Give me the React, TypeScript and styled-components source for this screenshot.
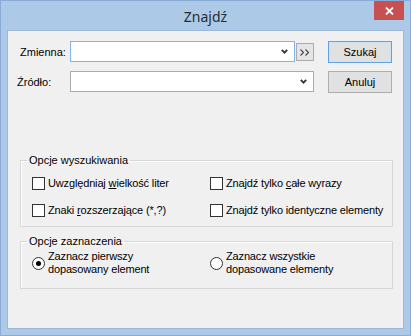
import React from 'react';
import styled, { createGlobalStyle } from 'styled-components';

const GlobalStyle = createGlobalStyle`
  html, body {
    margin: 0;
    padding: 0;
    background: #ffffff;
  }
  body {
    font-family: 'Liberation Sans', Arial, sans-serif;
    font-size: 11px;
    color: #000;
  }
`;

const Window = styled.div`
  width: 411px;
  height: 336px;
  box-sizing: border-box;
  background: #adc9e8;
  border: 1px solid #8aabd5;
  padding: 0 6px 6px;
  display: flex;
  flex-direction: column;
`;

const TitleBar = styled.div`
  height: 29px;
  display: grid;
  grid-template-columns: 1fr auto 1fr;
  align-items: center;
`;

const Title = styled.div`
  grid-column: 2;
  font-family: 'Noto Sans', 'Open Sans', sans-serif;
  font-size: 14px;
  color: #2b2b2b;
  padding-top: 1px;
`;

const CloseButton = styled.div`
  grid-column: 3;
  justify-self: end;
  align-self: start;
  width: 30px;
  height: 19px;
  background: #c75050;
  display: flex;
  align-items: center;
  justify-content: center;
`;

const Client = styled.div`
  flex: 1;
  background: #f0f0f0;
  border: 1px solid #9db8da;
  display: flex;
  flex-direction: column;
  padding-top: 10px;
`;

const FormGrid = styled.div`
  display: grid;
  grid-template-columns: 62px 225px 1px 18px 14px 64px;
  grid-template-rows: 22px 22px;
  row-gap: 8px;
  align-items: center;
`;

const Label = styled.label<{ $indent: number }>`
  grid-column: 1;
  padding-left: ${(p) => p.$indent}px;
`;

const Combo = styled.div<{ $focused?: boolean; $span: number }>`
  grid-column: 2 / span ${(p) => p.$span};
  align-self: start;
  height: 21px;
  box-sizing: border-box;
  background: #fff;
  border: 1px solid ${(p) => (p.$focused ? '#7eb4ea' : '#acacac')};
  display: flex;
  align-items: center;
  justify-content: flex-end;
  padding-right: 6px;
`;

const MoreButton = styled.div`
  grid-column: 4;
  width: 18px;
  height: 18px;
  box-sizing: border-box;
  background: #e5e5e5;
  border: 1px solid #acacac;
  display: flex;
  align-items: center;
  justify-content: center;
`;

const Button = styled.div<{ $default?: boolean }>`
  grid-column: 6;
  height: 22px;
  box-sizing: border-box;
  background: #e1e1e1;
  border: 1px solid ${(p) => (p.$default ? '#5fa2e4' : '#adadad')};
  box-shadow: ${(p) => (p.$default ? 'inset 0 0 0 1px #cfe3f7' : 'none')};
  display: flex;
  align-items: center;
  justify-content: center;
`;

const Group = styled.fieldset<{ $top: number }>`
  margin: ${(p) => p.$top}px 10px 0 12px;
  padding: 0;
  min-width: 0;
  border: 1px solid #d7d7d7;
  box-shadow: inset 1px 1px 0 #fff;
`;

const Legend = styled.legend`
  margin-left: 6px;
  padding: 0 2px;
  line-height: 13px;
`;

const OptionsGrid = styled.div<{ $pad: string }>`
  display: grid;
  grid-template-columns: 178px 1fr;
  row-gap: 11px;
  padding: ${(p) => p.$pad};
  align-items: center;
`;

const Option = styled.div`
  display: flex;
  align-items: center;
  gap: 3px;
  line-height: 16px;
  letter-spacing: -0.15px;
`;

const CheckBox = styled.span`
  width: 13px;
  height: 13px;
  box-sizing: border-box;
  background: #fff;
  border: 1px solid #333;
  flex: none;
`;

const Radio = styled.span<{ $checked?: boolean }>`
  width: 13px;
  height: 13px;
  box-sizing: border-box;
  background: #fff;
  border: 1px solid #333;
  border-radius: 50%;
  flex: none;
  display: flex;
  align-items: center;
  justify-content: center;

  &::after {
    content: '';
    display: ${(p) => (p.$checked ? 'block' : 'none')};
    width: 5px;
    height: 5px;
    border-radius: 50%;
    background: #000;
  }
`;

const RadioText = styled.span`
  line-height: 13px;
`;

const Chevron = () => (
  <svg width="7" height="5" viewBox="0 0 7 5">
    <polyline points="0.8,0.8 3.5,3.6 6.2,0.8" fill="none" stroke="#333" strokeWidth="1.8" />
  </svg>
);

const DoubleArrow = () => (
  <svg width="10" height="7" viewBox="0 0 10 7">
    <path d="M0.5 0.5 L3.5 3.5 L0.5 6.5 M5.5 0.5 L8.5 3.5 L5.5 6.5" fill="none" stroke="#444" strokeWidth="1.1" />
  </svg>
);

export default function App() {
  return (
    <>
      <GlobalStyle />
      <Window>
        <TitleBar>
          <Title>Znajdź</Title>
          <CloseButton>
            <svg width="9" height="8" viewBox="0 0 9 8">
              <path d="M1 0.5 L8 7.5 M8 0.5 L1 7.5" stroke="#fff" strokeWidth="1.8" />
            </svg>
          </CloseButton>
        </TitleBar>
        <Client>
          <FormGrid>
            <Label $indent={12}>Zmienna:</Label>
            <Combo $focused $span={1}>
              <Chevron />
            </Combo>
            <MoreButton>
              <DoubleArrow />
            </MoreButton>
            <Button $default>Szukaj</Button>
            <Label $indent={9}>Źródło:</Label>
            <Combo $span={3}>
              <Chevron />
            </Combo>
            <Button>Anuluj</Button>
          </FormGrid>

          <Group $top={61}>
            <Legend>Opcje wyszukiwania</Legend>
            <OptionsGrid $pad="8px 0 8px 11px">
              <Option>
                <CheckBox />
                <span>
                  Uwzględniaj <u>w</u>ielkość liter
                </span>
              </Option>
              <Option>
                <CheckBox />
                <span>
                  Znajdź tylko <u>c</u>ałe wyrazy
                </span>
              </Option>
              <Option>
                <CheckBox />
                <span>
                  Znaki <u>r</u>ozszerzające (*,?)
                </span>
              </Option>
              <Option>
                <CheckBox />
                <span>Znajdź tylko identyczne elementy</span>
              </Option>
            </OptionsGrid>
          </Group>

          <Group $top={8}>
            <Legend>Opcje zaznaczenia</Legend>
            <OptionsGrid $pad="2px 0 12px 11px">
              <Option>
                <Radio $checked />
                <RadioText>
                  Zaznacz pierwszy
                  <br />
                  dopasowany element
                </RadioText>
              </Option>
              <Option>
                <Radio />
                <RadioText>
                  Zaznacz wszystkie
                  <br />
                  dopasowane elementy
                </RadioText>
              </Option>
            </OptionsGrid>
          </Group>
        </Client>
      </Window>
    </>
  );
}
